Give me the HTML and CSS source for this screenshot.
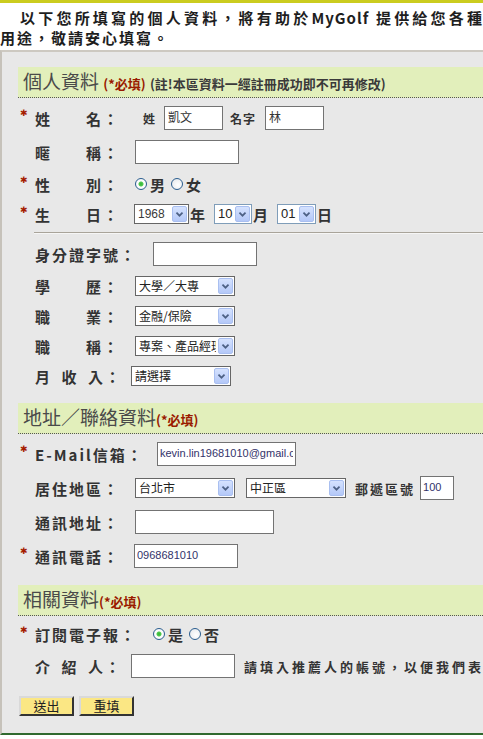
FILE: index.html
```html
<!DOCTYPE html>
<html lang="zh-Hant">
<head>
    <meta charset="UTF-8">
    <meta name="viewport" content="width=device-width, initial-scale=1.0">
    <title>會員資料 - MyGolf</title>
    <link rel="stylesheet" href="styles.css">
</head>
<body>
    <div class="topbar"></div>
    <p class="intro"><span class="intro-first">以下您所填寫的個人資料，將有助於MyGolf 提供給您各種</span>用途，敬請安心填寫。</p>

    <form class="panel">
        <div class="section">
            <h2 class="sec-title">個人資料 <span class="req">(*必填)</span> <span class="note">(註!本區資料一經註冊成功即不可再修改)</span></h2>
            <div class="sec-body">
                <div class="row">
                    <span class="mark">✱</span><label class="lbl">姓　　名：</label>
                    <span class="sub sub-last">姓</span><input type="text" class="field w59" value="凱文">
                    <span class="sub sub-first">名字</span><input type="text" class="field w59" value="林">
                </div>
                <div class="row">
                    <span class="mark"></span><label class="lbl">暱　　稱：</label>
                    <input type="text" class="field w104">
                </div>
                <div class="row short">
                    <span class="mark">✱</span><label class="lbl">性　　別：</label>
                    <input type="radio" name="sex" class="radio" checked><span class="opt">男</span>
                    <input type="radio" name="sex" class="radio"><span class="opt">女</span>
                </div>
                <div class="row short">
                    <span class="mark">✱</span><label class="lbl lbl-99">生　　日：</label>
                    <span class="sel w55"><select><option>1968</option></select><i class="arrow"><svg viewBox="0 0 15 16"><path d="M4 6.5 7.5 10 11 6.5"/></svg></i></span><span class="unit">年</span>
                    <span class="sel w38 blue"><select><option>10</option></select><i class="arrow"><svg viewBox="0 0 15 16"><path d="M4 6.5 7.5 10 11 6.5"/></svg></i></span><span class="unit">月</span>
                    <span class="sel w39 blue"><select><option>01</option></select><i class="arrow"><svg viewBox="0 0 15 16"><path d="M4 6.5 7.5 10 11 6.5"/></svg></i></span><span class="unit">日</span>
                </div>
                <hr class="sep">
                <div class="row">
                    <span class="mark"></span><label class="lbl lbl-118">身分證字號：</label>
                    <input type="text" class="field w104">
                </div>
                <div class="row short">
                    <span class="mark"></span><label class="lbl">學　　歷：</label>
                    <span class="sel w100"><select><option>大學／大專</option></select><i class="arrow"><svg viewBox="0 0 15 16"><path d="M4 6.5 7.5 10 11 6.5"/></svg></i></span>
                </div>
                <div class="row short">
                    <span class="mark"></span><label class="lbl">職　　業：</label>
                    <span class="sel w100"><select><option>金融/保險</option></select><i class="arrow"><svg viewBox="0 0 15 16"><path d="M4 6.5 7.5 10 11 6.5"/></svg></i></span>
                </div>
                <div class="row short">
                    <span class="mark"></span><label class="lbl">職　　稱：</label>
                    <span class="sel w100"><select><option>專案、產品經理</option></select><i class="arrow"><svg viewBox="0 0 15 16"><path d="M4 6.5 7.5 10 11 6.5"/></svg></i></span>
                </div>
                <div class="row short">
                    <span class="mark"></span><label class="lbl lbl-96">月&ensp;收&ensp;入：</label>
                    <span class="sel w100"><select><option>請選擇</option></select><i class="arrow"><svg viewBox="0 0 15 16"><path d="M4 6.5 7.5 10 11 6.5"/></svg></i></span>
                </div>
            </div>
        </div>

        <div class="section">
            <h2 class="sec-title">地址／聯絡資料<span class="req">(*必填)</span></h2>
            <div class="sec-body">
                <div class="row">
                    <span class="mark">✱</span><label class="lbl lbl-122">E-Mail信箱：</label>
                    <input type="text" class="field w139 latin" value="kevin.lin19681010@gmail.com">
                </div>
                <div class="row">
                    <span class="mark"></span><label class="lbl">居住地區：</label>
                    <span class="sel w100"><select><option>台北市</option></select><i class="arrow"><svg viewBox="0 0 15 16"><path d="M4 6.5 7.5 10 11 6.5"/></svg></i></span>
                    <span class="sel w100 next"><select><option>中正區</option></select><i class="arrow"><svg viewBox="0 0 15 16"><path d="M4 6.5 7.5 10 11 6.5"/></svg></i></span>
                    <span class="zip-lbl">郵遞區號</span><input type="text" class="field w34 latin" value="100">
                </div>
                <div class="row">
                    <span class="mark"></span><label class="lbl">通訊地址：</label>
                    <input type="text" class="field w139">
                </div>
                <div class="row">
                    <span class="mark">✱</span><label class="lbl lbl-99">通訊電話：</label>
                    <input type="text" class="field w104 latin" value="0968681010">
                </div>
            </div>
        </div>

        <div class="section">
            <h2 class="sec-title">相關資料<span class="req">(*必填)</span></h2>
            <div class="sec-body">
                <div class="row short">
                    <span class="mark">✱</span><label class="lbl lbl-118">訂閱電子報：</label>
                    <input type="radio" name="epaper" class="radio" checked><span class="opt">是</span>
                    <input type="radio" name="epaper" class="radio"><span class="opt">否</span>
                </div>
                <div class="row">
                    <span class="mark"></span><label class="lbl lbl-96">介&ensp;紹&ensp;人：</label>
                    <input type="text" class="field w104">
                    <span class="hint">請填入推薦人的帳號，以便我們表</span>
                </div>
            </div>
        </div>

        <div class="actions">
            <button type="submit" class="btn">送出</button>
            <button type="reset" class="btn">重填</button>
        </div>
    </form>
</body>
</html>
```

FILE: styles.css
```css
html, body {
    margin: 0;
    padding: 0;
    background: #fff;
    overflow: hidden;
}

body {
    font-family: "Noto Sans CJK TC", "Liberation Sans", sans-serif;
    color: #333;
}

.topbar {
    height: 3px;
    background: #cbcc1f;
}

.intro {
    margin: 5px 0 2px;
    font-size: 15px;
    line-height: 20px;
    font-weight: bold;
    letter-spacing: 2px;
    white-space: nowrap;
    color: #1e1e1e;
}

.intro-first {
    display: block;
    padding-left: 20px;
    text-align: justify;
    text-align-last: justify;
    letter-spacing: 1px;
}

.panel {
    background: #e8e8e8;
    border-top: 2px solid #cdc9c1;
    border-left: 2px solid #c6c2ba;
    border-bottom: 2px solid #2f6a2f;
    padding: 15px 0 17px 16px;
    overflow: hidden;
}

.section + .section {
    margin-top: 12px;
}

.section:last-of-type {
    margin-top: 14px;
}

.sec-title {
    margin: 0;
    height: 30px;
    line-height: 28px;
    padding-left: 5px;
    background: #e2efbb;
    border-bottom: 1px dotted #555;
    font-size: 19px;
    font-weight: normal;
    color: #4a4a4a;
    white-space: nowrap;
}

.req {
    font-size: 13px;
    font-weight: bold;
    color: #9a1b00;
}

.note {
    font-size: 13px;
    font-weight: bold;
    color: #3a3a3a;
}

.sec-body {
    padding-top: 3px;
}

.row {
    display: flex;
    align-items: center;
    height: 34px;
    padding-left: 2px;
    white-space: nowrap;
}

.row > * {
    flex-shrink: 0;
}

.row.short {
    height: 30px;
}

.mark {
    width: 15px;
    align-self: flex-start;
    margin-top: 8px;
    box-sizing: border-box;
    color: #a51d00;
    font-family: "DejaVu Sans", sans-serif;
    font-size: 9px;
    line-height: 9px;
}

.row.short .mark {
    margin-top: 7px;
}

.lbl {
    width: 100px;
    font-size: 15px;
    font-weight: bold;
    letter-spacing: 2px;
    color: #333;
}

.lbl-96 { width: 96px; }
.lbl-99 { width: 99px; }
.lbl-118 { width: 118px; }
.lbl-122 { width: 122px; }

.sub {
    font-size: 12px;
    font-weight: bold;
    color: #333;
}

.sub-last {
    margin: 0 9px 0 8px;
}

.sub-first {
    margin: 0 9px 0 7px;
    letter-spacing: 1px;
}

.field {
    box-sizing: border-box;
    height: 24px;
    border: 1px solid #737373;
    background: #fff;
    padding: 0 3px 4px;
    font-family: "Noto Sans CJK TC", sans-serif;
    font-size: 12px;
    color: #333;
    border-radius: 0;
}

.field.latin {
    font-family: "Liberation Sans", sans-serif;
    font-size: 11px;
    color: #33336a;
    padding: 0 2px 3px;
}

.w34 { width: 34px; }
.w59 { width: 59px; }
.w104 { width: 104px; }
.w139 { width: 139px; }

.radio {
    appearance: none;
    -webkit-appearance: none;
    box-sizing: border-box;
    width: 12px;
    height: 12px;
    margin: 0 3px 0 0;
    border: 1px solid #2a5d8f;
    border-radius: 50%;
    background: radial-gradient(circle at 60% 60%, #fff 0, #eef0f2 60%, #d9dde2 100%);
}

.radio:checked {
    background: radial-gradient(circle, #34b434 0, #50c950 2px, #fff 3px, #eef0f2 100%);
}

.opt {
    font-size: 15px;
    font-weight: bold;
    margin-right: 6px;
}

.sel {
    position: relative;
    display: block;
    height: 20px;
}

.sel select {
    appearance: none;
    -webkit-appearance: none;
    display: block;
    box-sizing: border-box;
    width: 100%;
    height: 20px;
    margin: 0;
    padding: 0 18px 1px 3px;
    border: 1px solid #666;
    border-radius: 0;
    background: #fff;
    font-family: "Noto Sans CJK TC", sans-serif;
    font-size: 12px;
    color: #222;
}

.sel.blue select {
    border-color: #7f9db9;
    font-family: "Liberation Sans", sans-serif;
    font-size: 13px;
}

.sel.w55 select {
    font-family: "Liberation Sans", sans-serif;
    font-size: 12px;
    color: #3a3a3a;
}

.sel .arrow {
    position: absolute;
    top: 2px;
    right: 2px;
    width: 15px;
    height: 16px;
    box-sizing: border-box;
    border: 1px solid #a9bff0;
    border-radius: 2px;
    background: linear-gradient(#d5e2fe, #b4c8f8);
    pointer-events: none;
}

.sel .arrow svg {
    display: block;
    width: 13px;
    height: 14px;
    fill: none;
    stroke: #4d6185;
    stroke-width: 2;
}

.w38 { width: 38px; }
.w39 { width: 39px; }
.w55 { width: 55px; }
.w100 { width: 100px; }

.unit {
    font-size: 15px;
    font-weight: bold;
    margin: 0 9px 0 1px;
}

.next {
    margin-left: 11px;
}

.zip-lbl {
    margin: 0 5px 0 9px;
    font-size: 13px;
    font-weight: bold;
    letter-spacing: 2px;
}

.hint {
    margin-left: 9px;
    font-size: 13px;
    font-weight: bold;
    letter-spacing: 3px;
    color: #333;
}

.sep {
    margin: 3px 0 3px 16px;
    height: 0;
    border: 0;
    border-top: 1px solid #a9a49a;
    border-bottom: 1px solid #f6f6f6;
}

.actions {
    display: flex;
    gap: 5px;
    margin-top: 13px;
    padding-left: 1px;
}

.btn {
    box-sizing: border-box;
    width: 55px;
    height: 20px;
    padding: 0;
    background: #fbe784;
    border: 2px solid;
    border-color: #d9d9d9 #333 #333 #d9d9d9;
    font-family: "Noto Sans CJK TC", sans-serif;
    font-size: 13px;
    line-height: 14px;
    color: #222;
}
```
